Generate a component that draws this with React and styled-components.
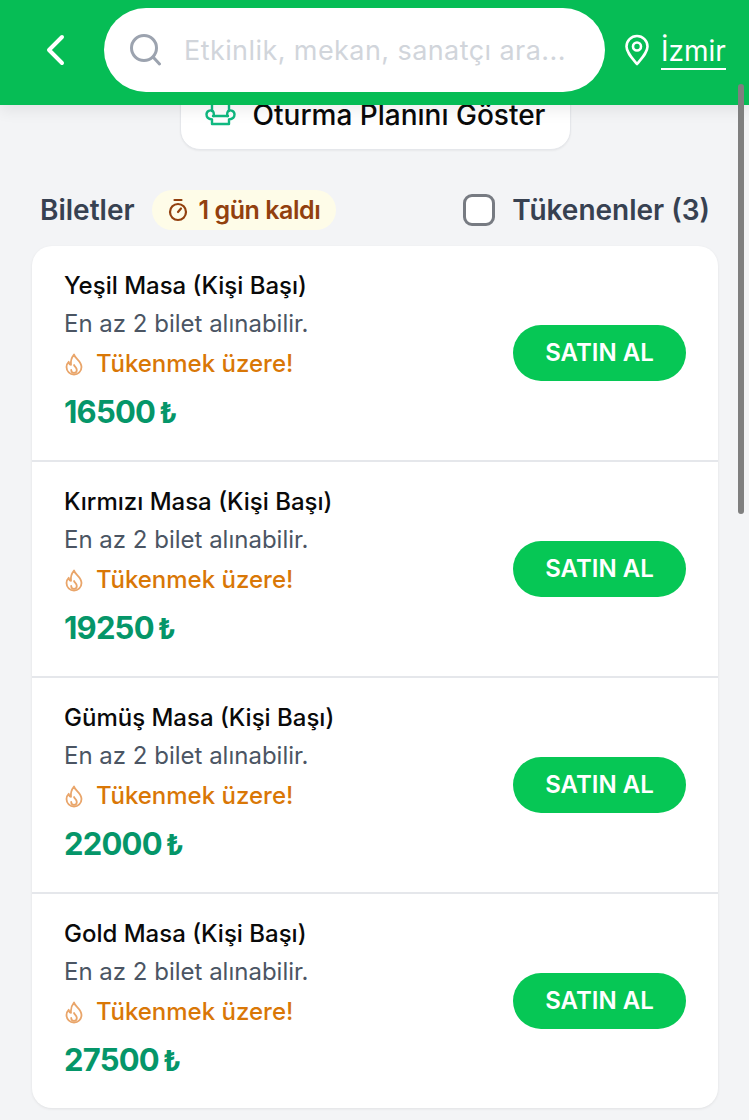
import React from "react";
import styled, { createGlobalStyle } from "styled-components";

const Global = createGlobalStyle`
  html, body { margin: 0; padding: 0; background: #f3f4f6; }
  body { font-family: Inter, "Noto Sans", sans-serif; -webkit-font-smoothing: antialiased; }
  * { box-sizing: border-box; }
`;

const Page = styled.div`
  position: relative;
  width: 749px;
  height: 1120px;
  overflow: hidden;
  background: #f3f4f6;
`;

const Header = styled.header`
  position: relative;
  z-index: 2;
  height: 105px;
  background: #06bd55;
  display: flex;
  align-items: flex-start;
  padding: 8px 23px 0 44px;
  box-shadow: 0 6px 14px rgba(0, 0, 0, 0.07);
`;

const BackButton = styled.div`
  width: 60px;
  height: 84px;
  display: flex;
  align-items: center;
  flex: none;
`;

const SearchBox = styled.div`
  width: 501px;
  height: 84px;
  border-radius: 42px;
  background: #fff;
  display: flex;
  align-items: center;
  gap: 22px;
  padding-left: 26px;
  flex: none;
`;

const Placeholder = styled.span`
  font-size: 27px;
  letter-spacing: 0.42px;
  color: #d1d5db;
  white-space: nowrap;
`;

const City = styled.div`
  display: flex;
  align-items: center;
  gap: 11px;
  height: 84px;
  margin-left: 19px;
  flex: none;
`;

const CityName = styled.span`
  font-size: 28px;
  line-height: 34px;
  color: #fff;
  border-bottom: 2px solid #fff;
  margin-top: 4px;
`;

const Content = styled.main`
  padding: 0 31px 0 32px;
`;

const PlanRow = styled.div`
  display: flex;
  justify-content: center;
  margin-top: -20px;
`;

const PlanButton = styled.div`
  width: 391px;
  height: 65px;
  background: #fff;
  border: 1px solid #e5e7eb;
  border-radius: 20px;
  display: flex;
  align-items: center;
  justify-content: center;
  gap: 17px;
  padding-bottom: 6px;
  font-size: 28px;
  font-weight: 500;
  color: #0a0a0a;
  box-shadow: 0 1px 2px rgba(0, 0, 0, 0.05);
`;

const TicketsHead = styled.div`
  height: 42px;
  margin: 39px 8px 15px 8px;
  display: flex;
  align-items: center;
`;

const TicketsTitle = styled.h2`
  margin: 0 17px 0 0;
  font-size: 28px;
  font-weight: 600;
  color: #374151;
`;

const Countdown = styled.div`
  height: 40px;
  padding: 0 16px 0 16px;
  border-radius: 20px;
  background: #fefce8;
  display: flex;
  align-items: center;
  gap: 11px;
  font-size: 25px;
  font-weight: 600;
  letter-spacing: -0.45px;
  color: #92400e;
`;

const SoldOutToggle = styled.div`
  margin-left: auto;
  display: flex;
  align-items: center;
  gap: 17px;
  font-size: 28px;
  font-weight: 600;
  color: #374151;
`;

const Checkbox = styled.span`
  width: 32px;
  height: 32px;
  background: #fff;
  border: 3px solid #777b82;
  border-radius: 9px;
`;

const Card = styled.section`
  background: #fff;
  border-radius: 20px;
  overflow: hidden;
  box-shadow: 0 1px 3px rgba(0, 0, 0, 0.08);
`;

const Row = styled.article`
  height: 216px;
  padding: 24px 32px 0 32px;
  display: flex;
  align-items: flex-start;
  justify-content: space-between;
  border-bottom: 2px solid #e5e7eb;
  &:last-child { border-bottom: none; height: 214px; }
`;

const Info = styled.div`
  display: flex;
  flex-direction: column;
`;

const Title = styled.div`
  font-size: 24px;
  line-height: 32px;
  font-weight: 500;
  color: #0a0a0a;
`;

const Note = styled.div`
  margin-top: 6px;
  font-size: 24px;
  line-height: 32px;
  color: #4b5563;
`;

const Warning = styled.div`
  margin-top: 8px;
  display: flex;
  align-items: center;
  gap: 11px;
  font-size: 24px;
  line-height: 31px;
  font-weight: 500;
  color: #d97706;
`;

const Price = styled.div`
  margin-top: 13px;
  display: flex;
  align-items: baseline;
  gap: 4px;
  font-size: 31px;
  line-height: 40px;
  font-weight: 700;
  letter-spacing: -0.8px;
  color: #059669;
`;

const Lira = styled.span`
  font-size: 28px;
  font-weight: 700;
`;

const BuyButton = styled.button`
  margin-top: 55px;
  width: 173px;
  height: 56px;
  padding: 0 0 2px;
  border: none;
  border-radius: 28px;
  background: #06c755;
  color: #fff;
  font-family: inherit;
  font-size: 24px;
  font-weight: 600;
  flex: none;
`;

const ScrollThumb = styled.div`
  position: absolute;
  z-index: 3;
  top: 84px;
  right: 5px;
  width: 6px;
  height: 430px;
  border-radius: 3px;
  background: #7f7f7f;
`;

const ChevronLeft = () => (
  <svg width="24" height="34" viewBox="0 0 24 34" fill="none" stroke="#fff" strokeWidth="4" strokeLinecap="round" strokeLinejoin="round">
    <path d="M18 4 5 17l13 13" />
  </svg>
);

const SearchIcon = () => (
  <svg width="32" height="32" viewBox="0 0 32 32" fill="none" stroke="#9ca3af" strokeWidth="3" strokeLinecap="round">
    <circle cx="14" cy="14" r="12.500" />
    <path d="m23.500 23.500 6 6.500" />
  </svg>
);

const PinIcon = () => (
  <svg width="26" height="32" viewBox="0 0 26 32" fill="none" stroke="#fff" strokeWidth="2.6" strokeLinejoin="round">
    <path d="M13 30C8 24 2.5 18.5 2.5 12.5a10.5 10.5 0 0 1 21 0C23.500 18.500 18 24 13 30Z" />
    <circle cx="13" cy="12.500" r="4" />
  </svg>
);

const SofaIcon = () => (
  <svg width="31" height="22" viewBox="0 5 31 22" fill="none" stroke="#10b981" strokeWidth="2.400" strokeLinecap="round" strokeLinejoin="round">
    <path d="M7 12V2h17v10" />
    <path d="M8 17h15" />
    <path d="M7 25v-4.500C3.500 20 1.500 18 1.500 15.500a4 4 0 0 1 6.500-3.200c.5.500.8 1.500.8 2.700V17M22.200 17v-2c0-1.200.3-2.200.8-2.700a4 4 0 0 1 6.500 3.200c0 2.500-2 4.500-5.500 5V25H7" />
  </svg>
);

const TimerIcon = () => (
  <svg width="20" height="24" viewBox="0 0 20 24" fill="none" stroke="#92400e" strokeWidth="2.200" strokeLinecap="round">
    <circle cx="10" cy="14" r="8" />
    <path d="M6.500 2h7M10 14l3-3.500" />
  </svg>
);

const FlameIcon = () => (
  <svg width="21" height="24" viewBox="0 0 21 24" fill="none" stroke="#e9a56a" strokeWidth="1.800" strokeLinecap="round" strokeLinejoin="round">
    <path d="M10 2.500c.5 3.500 7.500 6.500 7.500 12.500a7.500 7.500 0 0 1-15 0c0-2.500 1-4 2.200-5.200.3 1.800 1 2.700 2.300 3C6.500 9 8 5 10 2.500Z" />
    <path d="M10 13c.4 1.500 2.800 2.500 2.800 5a2.800 2.800 0 0 1-5.600 0" />
  </svg>
);

const tickets = [
  { name: "Yeşil Masa (Kişi Başı)", price: "16500" },
  { name: "Kırmızı Masa (Kişi Başı)", price: "19250" },
  { name: "Gümüş Masa (Kişi Başı)", price: "22000" },
  { name: "Gold Masa (Kişi Başı)", price: "27500" },
];

export default function App() {
  return (
    <Page>
      <Global />
      <Header>
        <BackButton><ChevronLeft /></BackButton>
        <SearchBox>
          <SearchIcon />
          <Placeholder>Etkinlik, mekan, sanatçı ara...</Placeholder>
        </SearchBox>
        <City>
          <PinIcon />
          <CityName>İzmir</CityName>
        </City>
      </Header>
      <Content>
        <PlanRow>
          <PlanButton>
            <SofaIcon />
            Oturma Planını Göster
          </PlanButton>
        </PlanRow>
        <TicketsHead>
          <TicketsTitle>Biletler</TicketsTitle>
          <Countdown>
            <TimerIcon />
            1 gün kaldı
          </Countdown>
          <SoldOutToggle>
            <Checkbox />
            Tükenenler (3)
          </SoldOutToggle>
        </TicketsHead>
        <Card>
          {tickets.map((t) => (
            <Row key={t.name}>
              <Info>
                <Title>{t.name}</Title>
                <Note>En az 2 bilet alınabilir.</Note>
                <Warning>
                  <FlameIcon />
                  Tükenmek üzere!
                </Warning>
                <Price>
                  {t.price}
                  <Lira>₺</Lira>
                </Price>
              </Info>
              <BuyButton>SATIN AL</BuyButton>
            </Row>
          ))}
        </Card>
      </Content>
      <ScrollThumb />
    </Page>
  );
}
